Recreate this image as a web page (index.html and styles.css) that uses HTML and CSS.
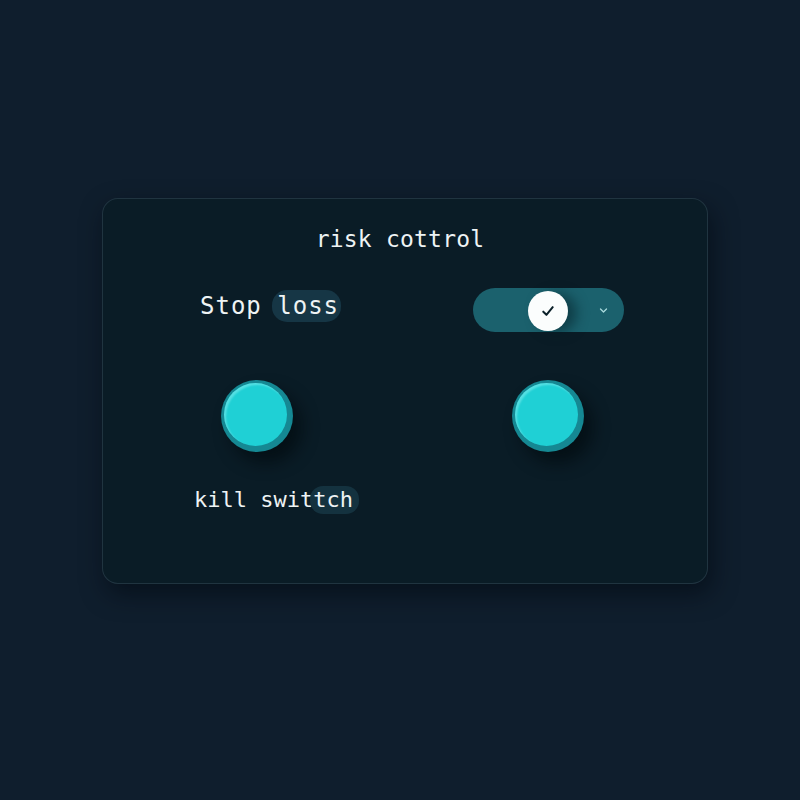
FILE: index.html
```html
<!DOCTYPE html>
<html lang="en">
<head>
<meta charset="utf-8">
<title>Risk control</title>
<link rel="stylesheet" href="styles.css">
</head>
<body>
  <section class="card">
    <h1 class="card-title">risk cottrol</h1>
    <div class="controls">
      <div class="label label-stop">Stop <span class="hl">loss</span></div>
      <div class="toggle" role="switch" aria-checked="true">
        <span class="knob">
          <svg width="18" height="18" viewBox="0 0 16 16" aria-hidden="true">
            <path d="M3.8 8.6 L6.6 11.4 L12.2 4.6" fill="none" stroke="#0b2029" stroke-width="1.8" stroke-linecap="round" stroke-linejoin="round"/>
          </svg>
        </span>
        <svg class="chev" width="9" height="7" viewBox="0 0 9 7" aria-hidden="true">
          <path d="M1.5 2 L4.5 5 L7.5 2" fill="none" stroke="#a9dadd" stroke-width="1.3" stroke-linecap="round" stroke-linejoin="round"/>
        </svg>
      </div>
      <button class="push push-left" type="button" aria-label="Stop loss"><span class="push-face"></span></button>
      <button class="push push-right" type="button" aria-label="Kill switch"><span class="push-face"></span></button>
      <div class="label label-kill">kill swit<span class="hl">tch</span></div>
    </div>
  </section>
</body>
</html>
```

FILE: styles.css
```css
html, body {
  margin: 0;
  padding: 0;
}

body {
  width: 800px;
  height: 800px;
  overflow: hidden;
  background: #0f1e2d;
  font-family: "DejaVu Sans Mono", "Liberation Mono", monospace;
  color: #eef3f4;
}

.card {
  box-sizing: border-box;
  width: 606px;
  height: 386px;
  margin: 198px 0 0 102px;
  padding: 26px 0 0 91px;
  border-radius: 16px;
  border: 1px solid rgba(120, 150, 170, 0.2);
  background: #0a1c26;
  box-shadow: 4px 10px 24px rgba(2, 8, 14, 0.55);
}

.card-title {
  margin: 0 0 0 -91px;
  padding-right: 10px;
  font-size: 23px;
  line-height: 28px;
  font-weight: normal;
  letter-spacing: 0.2px;
  text-align: center;
}

.controls {
  display: grid;
  grid-template-columns: 279px 151px;
  grid-template-rows: 44px 72px 28px;
  row-gap: 48px;
  margin-top: 35px;
}

.label {
  white-space: nowrap;
}

.hl {
  display: inline-block;
  padding: 0 4px;
  margin: 0 -4px;
  border-radius: 13px;
  background: #163645;
}

.label-stop {
  grid-column: 1;
  grid-row: 1;
  align-self: start;
  margin: 2px 0 0 6px;
  font-size: 24px;
  line-height: 32px;
  letter-spacing: 1px;
}

.label-stop .hl {
  padding: 0 2px 0 5px;
  margin: 0 -2px 0 -5px;
  border-radius: 15px;
}

.label-kill {
  grid-column: 1;
  grid-row: 3;
  margin-top: -14px;
  font-size: 22px;
  line-height: 28px;
}

.label-kill .hl {
  padding: 0 6px 0 3px;
  margin: 0 -6px 0 -3px;
  background: #14323f;
}

.toggle {
  grid-column: 2;
  grid-row: 1;
  display: flex;
  align-items: center;
  box-sizing: border-box;
  height: 44px;
  padding: 0 16px 0 55px;
  border-radius: 22px;
  background: #1b616d;
}

.knob {
  display: flex;
  align-items: center;
  justify-content: center;
  width: 40px;
  height: 40px;
  margin-top: 2px;
  border-radius: 50%;
  background: #fbfdfd;
  box-shadow: 9px 2px 12px rgba(4, 30, 38, 0.5);
}

.chev {
  margin-left: auto;
  margin-top: 1px;
}

.push {
  display: flex;
  box-sizing: border-box;
  width: 72px;
  height: 72px;
  padding: 3px 6px 6px 3px;
  border: 0;
  border-radius: 50%;
  background: #158893;
  box-shadow: 9px 11px 16px rgba(1, 8, 12, 0.6);
  cursor: pointer;
}

.push-face {
  flex: 1;
  border-radius: 50%;
  background: #1fd0d5;
  box-shadow: inset 2px 2px 2px rgba(190, 255, 255, 0.35);
}

.push-left {
  grid-column: 1;
  grid-row: 2;
  margin-left: 27px;
}

.push-right {
  grid-column: 2;
  grid-row: 2;
  justify-self: center;
  margin-left: -2px;
}
```
